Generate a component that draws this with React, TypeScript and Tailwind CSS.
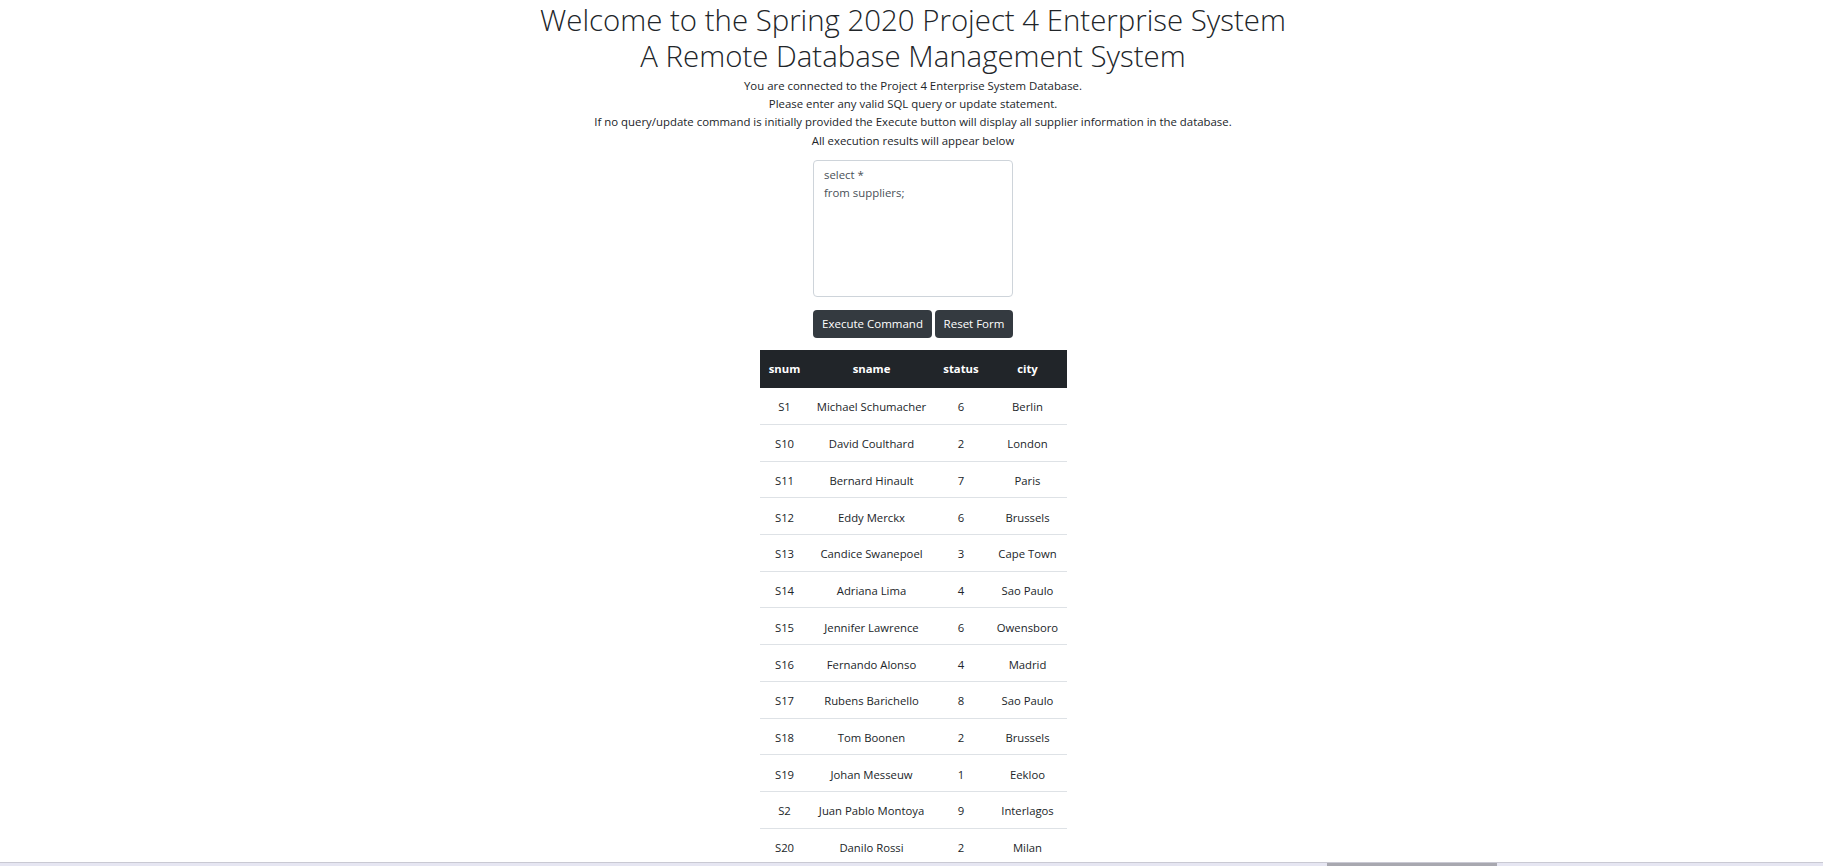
import React, { useState } from "react";

type Supplier = { snum: string; sname: string; status: number; city: string };

const suppliers: Supplier[] = [
  { snum: "S1", sname: "Michael Schumacher", status: 6, city: "Berlin" },
  { snum: "S10", sname: "David Coulthard", status: 2, city: "London" },
  { snum: "S11", sname: "Bernard Hinault", status: 7, city: "Paris" },
  { snum: "S12", sname: "Eddy Merckx", status: 6, city: "Brussels" },
  { snum: "S13", sname: "Candice Swanepoel", status: 3, city: "Cape Town" },
  { snum: "S14", sname: "Adriana Lima", status: 4, city: "Sao Paulo" },
  { snum: "S15", sname: "Jennifer Lawrence", status: 6, city: "Owensboro" },
  { snum: "S16", sname: "Fernando Alonso", status: 4, city: "Madrid" },
  { snum: "S17", sname: "Rubens Barichello", status: 8, city: "Sao Paulo" },
  { snum: "S18", sname: "Tom Boonen", status: 2, city: "Brussels" },
  { snum: "S19", sname: "Johan Messeuw", status: 1, city: "Eekloo" },
  { snum: "S2", sname: "Juan Pablo Montoya", status: 9, city: "Interlagos" },
  { snum: "S20", sname: "Danilo Rossi", status: 2, city: "Milan" },
];

const App = () => {
  const [query, setQuery] = useState("select *\nfrom suppliers;");

  return (
    <div className="h-[866px] overflow-hidden bg-white text-[#212529] font-['Open_Sans',sans-serif]">
      <div className="flex flex-col items-center pl-[3px] pt-[2px]">
        {/* Heading */}
        <h1 className="text-center text-[29.4px] leading-[36px] font-light">
          Welcome to the Spring 2020 Project 4 Enterprise System
          <br />
          A Remote Database Management System
        </h1>

        <div className="mt-[3px] text-center text-[11.4px] leading-[18.2px]">
          <p>You are connected to the Project 4 Enterprise System Database.</p>
          <p>Please enter any valid SQL query or update statement.</p>
          <p>
            If no query/update command is initially provided the Execute button will display all supplier
            information in the database.
          </p>
          <p>All execution results will appear below</p>
        </div>

        {/* Query form */}
        <form className="mt-[10px] flex flex-col items-center" onSubmit={(e) => e.preventDefault()}>
          <textarea
            value={query}
            onChange={(e) => setQuery(e.target.value)}
            className="w-[200px] h-[137px] resize-none rounded-[4px] border border-[#ced4da] px-[10px] py-[5px] text-[11.4px] leading-[18px] text-[#495057] outline-none"
          />
          <div className="mt-[13px] flex gap-[3px]">
            <button
              type="submit"
              className="h-[28px] w-[119px] rounded-[4px] bg-[#343a40] text-[11.5px] text-white"
            >
              Execute Command
            </button>
            <button
              type="button"
              onClick={() => setQuery("")}
              className="h-[28px] w-[78px] rounded-[4px] bg-[#343a40] text-[11.5px] text-white"
            >
              Reset Form
            </button>
          </div>
        </form>

        {/* Results */}
        <table className="mt-[12px] w-[307px] table-fixed border-collapse text-center text-[11.3px]">
          <thead>
            <tr className="h-[38px] bg-[#212529] text-white">
              <th className="w-[50px] pt-[2px] font-bold">snum</th>
              <th className="w-[124px] pt-[2px] font-bold">sname</th>
              <th className="w-[55px] pt-[2px] font-bold">status</th>
              <th className="w-[78px] pt-[2px] font-bold">city</th>
            </tr>
          </thead>
          <tbody>
            {suppliers.map((s, i) => (
              <tr key={s.snum} className={`h-[36.7px] ${i > 0 ? "border-t border-[#dee2e6]" : ""}`}>
                <td className="pt-[4px]">{s.snum}</td>
                <td className="whitespace-nowrap pt-[4px]">{s.sname}</td>
                <td className="pt-[4px]">{s.status}</td>
                <td className="pt-[4px]">{s.city}</td>
              </tr>
            ))}
          </tbody>
        </table>
      </div>

      {/* window scrollbar edge */}
      <div className="fixed bottom-0 left-0 right-0 h-[4px] border-t border-[#c9c9d3] bg-[#e6e6f2]">
        <div className="ml-[1327px] h-full w-[170px] bg-[#a8a8b0]" />
      </div>
    </div>
  );
};

export default App;
